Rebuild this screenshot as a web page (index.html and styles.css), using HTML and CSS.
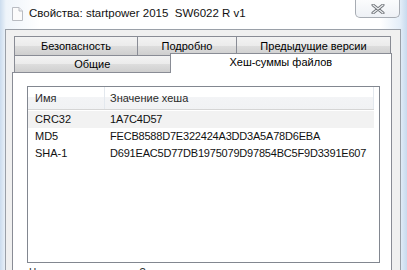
FILE: index.html
```html
<!DOCTYPE html>
<html lang="ru">
<head>
<meta charset="utf-8">
<title>Свойства</title>
<link rel="stylesheet" href="styles.css">
</head>
<body>
<div class="window">
  <div class="titlebar">
    <svg class="doc-icon" width="11" height="14" viewBox="0 0 11 14">
      <path d="M0.5 0.5 H7 L10.5 4 V13.5 H0.5 Z" fill="#fbfbfb" stroke="#b9bcc2"/>
      <path d="M7 0.5 V4 H10.5" fill="#eceef1" stroke="#b9bcc2"/>
    </svg>
    <span class="title">Свойства: startpower 2015&nbsp; SW6022 R v1</span>
    <div class="close">
      <svg width="14" height="10" viewBox="0 0 14 10">
        <path d="M2 1 L12 9 M12 1 L2 9" stroke="#6f7378" stroke-width="3" stroke-linecap="round"/>
        <path d="M2 1 L12 9 M12 1 L2 9" stroke="#eef0f2" stroke-width="1.2" stroke-linecap="round"/>
      </svg>
    </div>
  </div>
  <div class="client">
    <div class="tabs">
      <div class="tab-row">
        <div class="tab tab-sec">Безопасность</div>
        <div class="tab tab-det">Подробно</div>
        <div class="tab tab-prev">Предыдущие версии</div>
      </div>
      <div class="tab-row">
        <div class="tab tab-gen">Общие</div>
        <div class="tab tab-hash active">Хеш-суммы файлов</div>
      </div>
    </div>
    <div class="panel">
      <div class="listbox">
        <div class="lv-header">
          <div class="col col-name">Имя</div>
          <div class="col col-value">Значение хеша</div>
        </div>
        <div class="lv-row hover">
          <div class="col col-name">CRC32</div>
          <div class="col col-value">1A7C4D57</div>
        </div>
        <div class="lv-row">
          <div class="col col-name">MD5</div>
          <div class="col col-value">FECB8588D7E322424A3DD3A5A78D6EBA</div>
        </div>
        <div class="lv-row">
          <div class="col col-name">SHA-1</div>
          <div class="col col-value">D691EAC5D77DB1975079D97854BC5F9D3391E607</div>
        </div>
      </div>
      <div class="hint">Что такое хеш-суммы?</div>
    </div>
  </div>
</div>
</body>
</html>
```

FILE: styles.css
```css
* { box-sizing: border-box; }
html, body {
  margin: 0;
  padding: 0;
  width: 407px;
  height: 270px;
  overflow: hidden;
  background: #ffffff;
}
.window {
  width: 407px;
  height: 270px;
  overflow: hidden;
  font-family: "Liberation Sans", Arial, sans-serif;
  font-size: 11px;
  color: #000;
  background: linear-gradient(90deg, #cbdcee 0px, #eef4fa 6px, #ffffff 40px, #ffffff 380px, #e4eef8 400px, #c7daee 407px);
}
.titlebar {
  height: 29px;
  display: flex;
  align-items: flex-start;
  padding-left: 12px;
}
.doc-icon {
  margin-top: 7px;
  flex: none;
}
.title {
  margin-left: 6px;
  margin-top: 7px;
  font-size: 11.5px;
  color: #111;
  white-space: nowrap;
}
.close {
  margin-left: auto;
  margin-right: 7px;
  width: 45px;
  height: 18px;
  border: 1px solid #a7acb3;
  border-top: none;
  border-radius: 0 0 5px 5px;
  background: linear-gradient(#fbfcfd, #eef1f5);
  display: flex;
  align-items: center;
  justify-content: center;
  flex: none;
}
.client {
  margin-left: 5px;
  width: 396px;
  height: 241px;
  border-left: 1px solid #9aa0a8;
  border-top: 1px solid #9aa0a8;
  border-right: 1px solid #9aa0a8;
  background: #f0f0f0;
  padding: 6px 8px 0 6px;
}
.tabs {
  padding-left: 2px;
  display: flex;
  flex-direction: column;
}
.tab-row {
  display: flex;
}
.tab {
  border: 1px solid #898c95;
  border-bottom: none;
  background: linear-gradient(#f3f3f3 0%, #ebebeb 50%, #dddddd 51%, #cfcfcf 100%);
  text-align: center;
  white-space: nowrap;
  margin-left: -1px;
}
.tab:first-child { margin-left: 0; }
.tab-sec, .tab-det, .tab-prev { height: 19px; line-height: 18px; }
.tab-sec { width: 124px; }
.tab-det { width: 100px; }
.tab-prev { width: 155px; }
.tab-gen { width: 157px; height: 17px; line-height: 16px; }
.tab-hash {
  width: 223px;
}
.tab.active {
  background: #ffffff;
  height: 20px;
  margin-top: -2px;
  margin-bottom: -1px;
  line-height: 16px;
  position: relative;
  z-index: 1;
}
.panel {
  height: 200px;
  background: #ffffff;
  border: 1px solid #898c95;
  border-bottom: none;
  padding: 13px 11px 0 14px;
}
.listbox {
  height: 177px;
  border: 1px solid #828790;
  background: #fff;
}
.lv-header {
  display: flex;
  width: 346px;
  height: 23px;
  border-bottom: 1px solid #d5d5d5;
  background: linear-gradient(#ffffff 0%, #ffffff 45%, #f3f4f6 46%, #f1f2f4 100%);
  color: #2a2a2a;
}
.lv-header .col {
  line-height: 22px;
  border-right: 1px solid #e3e8ee;
}
.col-name {
  width: 77px;
  padding-left: 7px;
  flex: none;
}
.col-value {
  flex: 1;
  padding-left: 5px;
  white-space: nowrap;
}
.lv-row .col-value {
  letter-spacing: -0.2px;
}
.lv-row {
  display: flex;
  width: 346px;
  height: 17px;
  line-height: 17px;
  color: #111;
}
.lv-row.hover {
  background: #f2f2f2;
  margin-top: 1px;
}
.hint {
  margin-top: 3px;
  padding-left: 2px;
  color: #333;
}
```
